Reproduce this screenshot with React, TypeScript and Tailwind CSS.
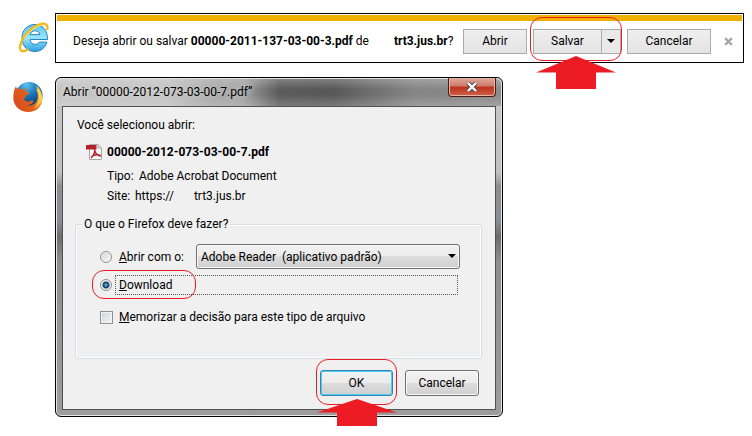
import type { ReactNode } from "react";

function InternetExplorerLogo() {
  return (
    <svg viewBox="0 0 32 32" className="h-8 w-8" aria-label="Internet Explorer">
      <defs>
        <linearGradient id="ie-blue" x1="0" y1="0" x2="0" y2="1">
          <stop offset="0" stopColor="#5cc3ee" />
          <stop offset="0.5" stopColor="#9be6fc" />
          <stop offset="1" stopColor="#2a9fe0" />
        </linearGradient>
      </defs>
      <path
        d="M29.500 18.500H12.200c.2 3.200 2 4.800 4.800 4.800 2.200 0 3.600-.6 4.400-2.200h7.500C27.300 26.800 23 30.500 17 30.500 9.200 30.500 4 25 4 17S9.300 3.500 17 3.500s12.700 5.800 12.500 15zM21.800 13.600c-.3-2.400-2.200-3.800-4.800-3.800s-4.400 1.400-4.900 3.800z"
        fill="url(#ie-blue)"
        stroke="#2586c4"
        strokeWidth="1"
      />
      <path
        d="M29.300 8c.6-2.800-.4-5-3.300-5.200C20 2.500 10.500 8.500 5.500 16.500 2 22.500.8 28.500 3.500 30c1.600.8 4-.2 6-1.500"
        fill="none"
        stroke="#f3b81c"
        strokeWidth="2.400"
        strokeLinecap="round"
      />
      <path
        d="M27.500 4.200C21 3 11.500 9.500 6.800 16.500"
        fill="none"
        stroke="#fde36a"
        strokeWidth="1"
      />
    </svg>
  );
}

function FirefoxLogo() {
  return (
    <svg viewBox="0 0 32 32" className="h-8 w-8" aria-label="Firefox">
      <defs>
        <radialGradient id="fx-globe" cx="0.4" cy="0.1" r="0.8">
          <stop offset="0" stopColor="#5cc4ee" />
          <stop offset="0.5" stopColor="#1b76b8" />
          <stop offset="1" stopColor="#123a72" />
        </radialGradient>
        <linearGradient id="fx-tail" x1="0" y1="0.8" x2="1" y2="0.3">
          <stop offset="0" stopColor="#d9481c" />
          <stop offset="0.55" stopColor="#e0601c" />
          <stop offset="1" stopColor="#fdd04e" />
        </linearGradient>
      </defs>
      <circle cx="17" cy="14.500" r="13.500" fill="url(#fx-globe)" />
      <path
        d="M4 5c.3 1.800 1 2.700 2 3.300C8 7.600 10 7.800 11.500 8.600c1-.9 2-1.500 3.500-1.600-1.200 1-1.800 2-1.700 3.200 1 .8 2.700.8 3.700 1.100.2 1.500-.8 2.300-3.300 3.500.4 2-1.200 2.300-1.900 3.200.8 2.200 3.500 3 6 2.200 1.600-.5 2.400-1 3.600-.2-.8 2.500-3 4-5.900 4.200 5.500 1 9.500-2.200 10.300-7.200.5-3.300-.2-6.500-2.300-9.500 4 2.200 7 6.500 6.900 11C30.200 25.600 24 31 16.500 31 8 31 1.300 25 1.300 17c0-5 1-9 2.700-12z"
        fill="url(#fx-tail)"
      />
      <path
        d="M24 4.500c3.500 2.500 6.800 7.500 6 13-.7 4.500-4.500 8.300-8.500 10.300 4-3.300 5.700-7.800 5.300-12.300-.3-4-1.200-7-2.800-11z"
        fill="#fbd148"
      />
    </svg>
  );
}

function PdfIcon() {
  return (
    <svg viewBox="0 0 16 16" className="h-4 w-4 shrink-0" aria-hidden="true">
      <path d="M3.500.5h8.500l3.500 3.500v11.500h-12z" fill="#f7f7f7" stroke="#a8a8a8" />
      <path d="M12 .5v3.500h3.500" fill="#ddd" stroke="#a8a8a8" />
      <path d="M0 1h10.500v4.500H0z" fill="#b5202c" />
      <path
        d="M8.500 5c.8 3-.5 6-3.500 9M9 7c.5 2.500 2.500 4.500 6 5M5.500 12.500c2.500-1.800 5.500-2.300 9-1"
        fill="none"
        stroke="#b5202c"
        strokeWidth="1.400"
      />
    </svg>
  );
}

function Highlight({ className, children }: { className: string; children?: ReactNode }) {
  return (
    <div
      className={`pointer-events-none absolute z-10 rounded-xl border border-[#ed1c24] ${className}`}
    >
      {children}
    </div>
  );
}

function Arrow({ className }: { className: string }) {
  return (
    <svg
      viewBox="0 0 80 32"
      preserveAspectRatio="none"
      className={`absolute top-full left-1/2 w-20 -translate-x-1/2 ${className}`}
      aria-hidden="true"
    >
      <path d="M40 0 80 16H60v16H20V16H0z" fill="#ed1c24" />
    </svg>
  );
}

function BarButton({ className, children }: { className: string; children: ReactNode }) {
  return (
    <button
      type="button"
      className={`h-[25px] border border-[#ababab] bg-linear-to-b from-[#efefef] to-[#e3e3e3] ${className}`}
    >
      {children}
    </button>
  );
}

function DownloadBar() {
  return (
    <section className="min-w-0 flex-1 border border-black p-px">
      <div className="h-[6px] bg-[#f0b000]" />
      <div className="flex h-10 items-center pr-2 pl-4">
        <p className="flex-1 whitespace-nowrap">
          Deseja abrir ou salvar <b>00000-2011-137-03-00-3.pdf</b> de
          <b className="ml-[25px]">trt3.jus.br</b>?
        </p>
        <BarButton className="w-16">Abrir</BarButton>
        <div className="relative mx-[6px] flex">
          <BarButton className="w-[69px]">Salvar</BarButton>
          <button
            type="button"
            aria-label="Mais opções"
            className="-ml-px flex h-[25px] w-5 items-center justify-center border border-[#ababab] bg-[#e9e9e9]"
          >
            <svg viewBox="0 0 8 4" className="h-1 w-2">
              <path d="M0 0h8L4 4z" />
            </svg>
          </button>
          <Highlight className="-top-3 -right-px -bottom-[7px] -left-[3px]">
            <Arrow className="-mt-1 h-[33px]" />
          </Highlight>
        </div>
        <BarButton className="w-21">Cancelar</BarButton>
        <button type="button" aria-label="Fechar" className="ml-3 p-px">
          <svg viewBox="0 0 8 8" className="h-[9px] w-[9px]">
            <path d="M1 1l6 6M7 1l-6 6" stroke="#a6a6a6" strokeWidth="2" />
          </svg>
        </button>
      </div>
    </section>
  );
}

function TitleBar() {
  return (
    <header className="mx-[-5px] flex h-7 items-start justify-between rounded-t-[5px] bg-[linear-gradient(to_bottom,#ffffff40,transparent_40%,transparent_60%,#ffffff30),linear-gradient(to_right,#c4c4c4_0%,#c0c0c0_25%,#a6a6a6_35%,#a0a0a0_42%,#5c5c5c_50%,#585858_62%,#858585_80%,#8c8c8c_100%)] px-[5px] shadow-[inset_0_1px_0_#e4e4e4]">
      <h1 className="pt-[6px] pl-px whitespace-nowrap text-shadow-[0_0_6px_#ffffffd0]">
        Abrir “00000-2012-073-03-00-7.pdf”
      </h1>
      <button
        type="button"
        aria-label="Fechar"
        className="flex h-[19px] w-12 items-center justify-center rounded-b-[4px] border border-t-0 border-[#4a1a14] bg-[linear-gradient(to_bottom,#e0a79b,#cf7a69_45%,#bb2f18_50%,#d0644c)] shadow-[inset_0_0_0_1px_#e6b5aa]"
      >
        <svg viewBox="0 0 12 10" className="h-[10px] w-3">
          <path d="M2 1l8 8M10 1L2 9" stroke="#4d4d55" strokeWidth="4.400" />
          <path d="M2 1l8 8M10 1L2 9" stroke="#fff" strokeWidth="2.400" />
        </svg>
      </button>
    </header>
  );
}

function ActionOptions() {
  return (
    <fieldset className="mr-[13px] ml-3 rounded-[3px] border border-[#d5dfe5] pr-[23px] pb-[33px] pl-6 shadow-[inset_0_0_0_1px_#fff]">
      <legend className="-ml-[18px] bg-[#f0f0f0] px-[2px] leading-4">O que o Firefox deve fazer?</legend>
      <div className="mt-3 flex h-[25px] items-center">
        <input
          id="open"
          type="radio"
          name="action"
          className="h-3 w-3 appearance-none rounded-full border border-[#8e8f8f] bg-linear-to-br from-[#cfcfcf] to-white shadow-[inset_0_0_0_1px_#f4f4f4]"
        />
        <label htmlFor="open" className="ml-[7px] w-[77px] whitespace-nowrap">
          <u>A</u>brir com o:
        </label>
        <div className="relative mr-[-2px] flex-1">
          <select
            aria-label="Aplicativo"
            className="block h-[25px] w-full appearance-none rounded-[3px] border border-[#707070] bg-[linear-gradient(to_bottom,#f2f2f2,#ebebeb_50%,#dddddd_50%,#cfcfcf)] pl-1 shadow-[inset_0_0_0_1px_#f8f8f8]"
          >
            <option>Adobe Reader&nbsp; (aplicativo padrão)</option>
          </select>
          <svg viewBox="0 0 8 4" className="pointer-events-none absolute top-[10px] right-1 h-1 w-2">
            <path d="M0 0h8L4 4z" />
          </svg>
        </div>
      </div>
      <div className="relative mt-[6px] flex items-center">
        <input
          id="download"
          type="radio"
          name="action"
          defaultChecked
          className="h-3 w-3 appearance-none rounded-full border border-[#8e8f8f] bg-[radial-gradient(circle,#7fd0f0_0,#1a5f8a_2px,#123c5e_3px,#eeeeee_4px)]"
        />
        <label htmlFor="download" className="ml-[3px] h-5 flex-1 border border-dotted border-[#555] pl-[3px] leading-[18px]">
          <u>D</u>ownload
        </label>
        <Highlight className="-top-[5px] -bottom-1 -left-2 w-26" />
      </div>
      <div className="mt-[14px] flex items-center">
        <input
          id="remember"
          type="checkbox"
          className="h-[13px] w-[13px] appearance-none border border-[#8e8f8f] bg-linear-to-br from-[#cfd2d6] to-[#f6f6f6] shadow-[inset_0_0_0_1px_#f4f4f4]"
        />
        <label htmlFor="remember" className="ml-[6px] whitespace-nowrap">
          <u>M</u>emorizar a decisão para este tipo de arquivo
        </label>
      </div>
    </fieldset>
  );
}

function OpenDialog() {
  return (
    <section className="w-full max-w-md rounded-[6px] border border-black bg-[linear-gradient(to_bottom,#c8c8c8,#c0c0c0_28%,#8e8e8e_32%,#8a8f98_42%,#6c6c6c_47%,#8e8e8e_54%,#9c9c9c)] px-[6px] pb-[6px] shadow-[inset_0_0_0_1px_#e4e4e4]">
      <TitleBar />
      <div className="border border-[#505050] bg-[#f0f0f0] pt-[10px] pb-[13px]">
        <div className="px-[14px]">
          <p>Você selecionou abrir:</p>
          <div className="mt-[11px] ml-[9px] flex items-center gap-[5px]">
            <PdfIcon />
            <b>00000-2012-073-03-00-7.pdf</b>
          </div>
          <dl className="mt-2 ml-[30px] grid grid-cols-[auto_1fr] gap-y-1">
            <dt className="w-8">Tipo:</dt>
            <dd>Adobe Acrobat Document</dd>
            <dt>Site:</dt>
            <dd className="-ml-1">
              https://<span className="ml-5">trt3.jus.br</span>
            </dd>
          </dl>
        </div>
        <div className="mt-3">
          <ActionOptions />
        </div>
        <div className="mt-[11px] mr-4 flex justify-end gap-3">
          <div className="relative">
            <button
              type="button"
              className="h-[26px] w-[73px] rounded-[3px] border border-[#3c7fb1] bg-[linear-gradient(to_bottom,#f2f2f2,#ebebeb_50%,#dddddd_50%,#cfcfcf)] shadow-[inset_0_0_0_1px_#48d0f4]"
            >
              OK
            </button>
            <Highlight className="-inset-x-1 -top-[11px] -bottom-[9px]">
              <Arrow className="-mt-[5px] h-[27px]" />
            </Highlight>
          </div>
          <button
            type="button"
            className="h-[26px] w-[74px] rounded-[3px] border border-[#707070] bg-[linear-gradient(to_bottom,#f2f2f2,#ebebeb_50%,#dddddd_50%,#cfcfcf)] shadow-[inset_0_0_0_1px_#f8f8f8]"
          >
            Cancelar
          </button>
        </div>
      </div>
    </section>
  );
}

export default function App() {
  return (
    <main className="min-h-screen bg-white pt-[13px] pr-2 pb-2 font-[Roboto,'Open_Sans',sans-serif] text-[12px] leading-4 text-black">
      <div className="flex">
        <div className="flex w-[55px] items-start justify-center pt-2 pl-3">
          <InternetExplorerLogo />
        </div>
        <DownloadBar />
      </div>
      <div className="mt-[14px] flex">
        <div className="w-[55px] shrink-0 pt-1 pl-3">
          <FirefoxLogo />
        </div>
        <OpenDialog />
      </div>
    </main>
  );
}
